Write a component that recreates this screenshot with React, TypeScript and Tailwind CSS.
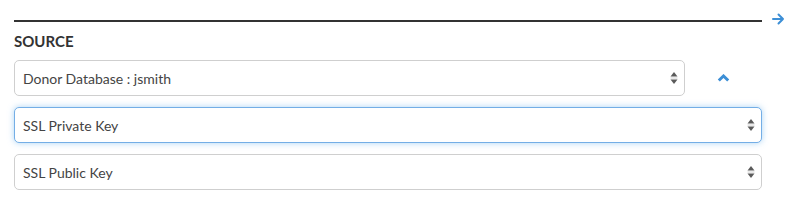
import type { ReactNode } from 'react'

function SelectArrows() {
  return (
    <svg width="8" height="14" viewBox="0 0 8 14" aria-hidden className="shrink-0">
      <path d="M4 1 L7.5 5.5 L0.5 5.5 Z" fill="#5a5a5a" />
      <path d="M0.5 7 H7.5" stroke="#c8c8c8" strokeWidth="0.8" />
      <path d="M4 13 L7.5 8.5 L0.5 8.5 Z" fill="#5a5a5a" />
    </svg>
  )
}

function FakeSelect({ label, focused = false, className = '' }: { label: string; focused?: boolean; className?: string }) {
  return (
    <div
      className={
        'flex h-[36px] items-center justify-between rounded-[5px] border bg-white pl-[8px] pr-[6px] text-[14px] text-[#444] ' +
        (focused
          ? 'border-[#74aee6] shadow-[0_0_6px_rgba(102,175,233,0.55)] '
          : 'border-[#cfcfcf] ') +
        className
      }
    >
      <span>{label}</span>
      <SelectArrows />
    </div>
  )
}

function Row({ children, className = '' }: { children: ReactNode; className?: string }) {
  return <div className={'flex ' + className}>{children}</div>
}

export default function App() {
  return (
    <div className="h-[201px] w-[790px] overflow-hidden bg-white pl-[14px] font-['Lato','Liberation_Sans',sans-serif]">
      <Row className="items-start pt-[13px]">
        <div className="mt-[7px] h-[2px] w-[748px] bg-[#333]" />
        <svg width="13" height="12" viewBox="0 0 13 12" className="ml-[10px]" aria-hidden>
          <path d="M1 6 H11 M6.5 1.5 L11 6 L6.5 10.5" fill="none" stroke="#3d8fd6" strokeWidth="2" strokeLinecap="round" strokeLinejoin="round" />
        </svg>
      </Row>
      <div className="mt-[7px] text-[15px] font-bold leading-[18px] text-[#333]">SOURCE</div>
      <Row className="mt-[10px] items-center">
        <FakeSelect label="Donor Database : jsmith" className="w-[671px]" />
        <svg width="13" height="8" viewBox="0 0 13 8" className="ml-[32px]" aria-hidden>
          <path d="M1.8 6.5 L6.5 2 L11.2 6.5" fill="none" stroke="#3d8fd6" strokeWidth="3" strokeLinejoin="miter" />
        </svg>
      </Row>
      <FakeSelect label="SSL Private Key" focused className="mt-[11px] w-[748px]" />
      <FakeSelect label="SSL Public Key" className="mt-[11px] w-[748px]" />
    </div>
  )
}
